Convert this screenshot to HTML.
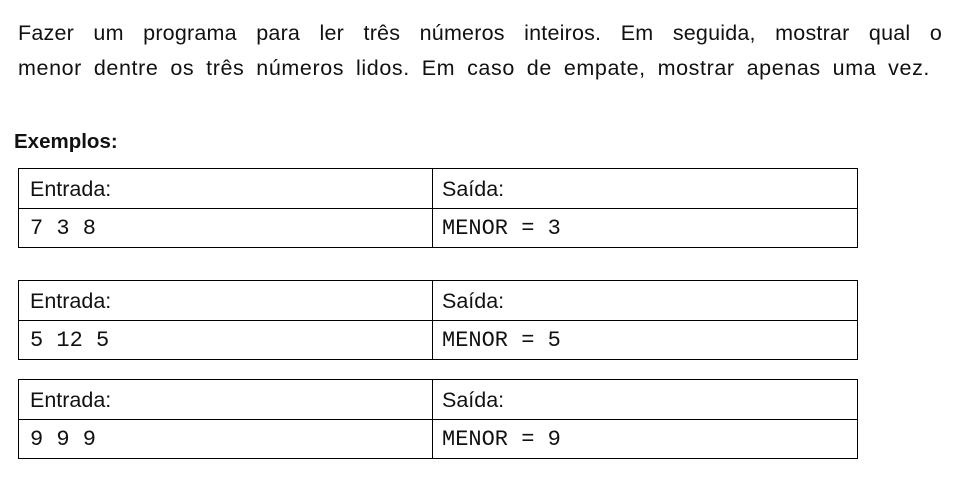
<!DOCTYPE html>
<html><head><meta charset="utf-8"><style>
body{margin:0;width:962px;height:489px;background:#fff;position:relative;overflow:hidden;font-family:"Liberation Sans",sans-serif;color:#111}
.l{position:absolute;left:18px;font-size:21.5px;white-space:nowrap;text-align:justify;text-align-last:justify;line-height:26px;letter-spacing:0.2px}
.t{position:absolute;left:18px;width:840px;height:80px;border:1px solid #000;box-sizing:border-box}
.t .h{position:absolute;left:0;right:0;top:39px;border-top:1px solid #000}
.t .v{position:absolute;left:413px;top:0;bottom:0;border-left:1px solid #000}
.c{position:absolute;font-size:21.5px;line-height:22px}
.m{font-family:"Liberation Mono",monospace;font-size:22px}
</style></head><body>
<div class="l" style="top:20px;width:924px">Fazer um programa para ler três números inteiros. Em seguida, mostrar qual o</div>
<div class="l" style="top:55px;width:912px;letter-spacing:0.6px">menor dentre os três números lidos. Em caso de empate, mostrar apenas uma vez.</div>
<div style="position:absolute;left:14px;top:130px;font-size:20.5px;font-weight:bold">Exemplos:</div>

<div class="t" style="top:168px"><div class="h"></div><div class="v"></div>
<div class="c" style="left:11px;top:9px">Entrada:</div><div class="c" style="left:423px;top:9px">Saída:</div>
<div class="c m" style="left:11px;top:49px">7 3 8</div><div class="c m" style="left:423px;top:49px">MENOR = 3</div></div>

<div class="t" style="top:280px"><div class="h"></div><div class="v"></div>
<div class="c" style="left:11px;top:9px">Entrada:</div><div class="c" style="left:423px;top:9px">Saída:</div>
<div class="c m" style="left:11px;top:49px">5 12 5</div><div class="c m" style="left:423px;top:49px">MENOR = 5</div></div>

<div class="t" style="top:379px"><div class="h"></div><div class="v"></div>
<div class="c" style="left:11px;top:9px">Entrada:</div><div class="c" style="left:423px;top:9px">Saída:</div>
<div class="c m" style="left:11px;top:49px">9 9 9</div><div class="c m" style="left:423px;top:49px">MENOR = 9</div></div>
</body></html>
